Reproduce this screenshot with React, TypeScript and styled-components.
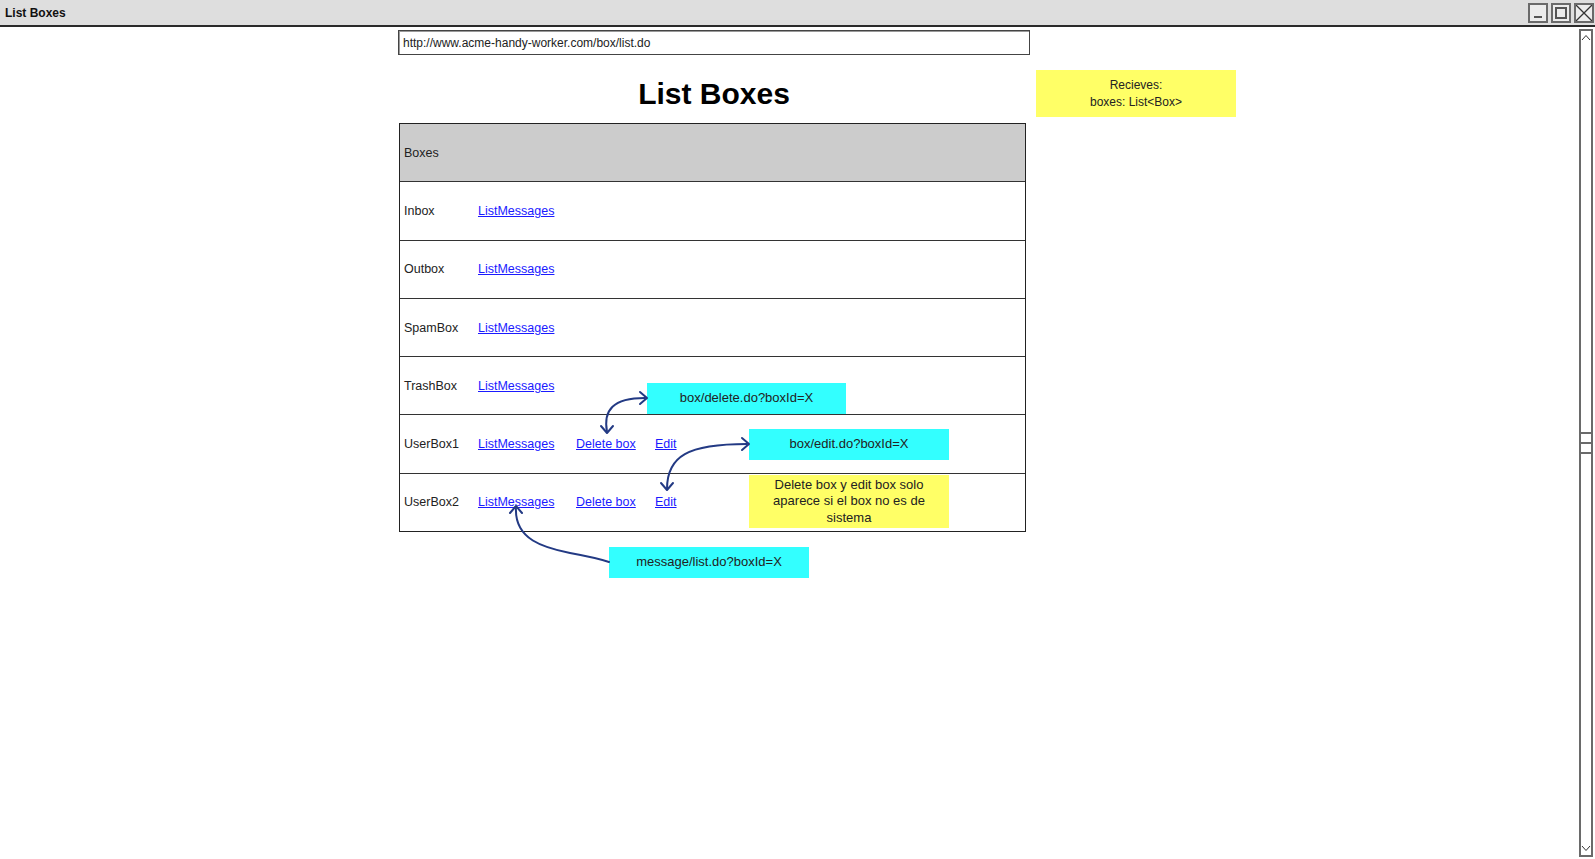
import React, { FC } from 'react';
import styled, { createGlobalStyle } from 'styled-components';

const GlobalStyle = createGlobalStyle`
  html, body {
    margin: 0;
    padding: 0;
    background: #ffffff;
  }
  body {
    font-family: 'Liberation Sans', Arial, sans-serif;
    color: #222222;
  }
`;

const INK = '#233a84';

const Window = styled.div`
  position: relative;
  width: 1595px;
  height: 859px;
  display: flex;
  flex-direction: column;
  overflow: hidden;
  background: #ffffff;
`;

const TitleBar = styled.div`
  height: 25px;
  flex: none;
  display: flex;
  align-items: center;
  justify-content: space-between;
  padding-left: 5px;
  background: #dedede;
  border-bottom: 2px solid #2a2a2a;
`;

const Title = styled.span`
  font-size: 12px;
  font-weight: bold;
  color: #111111;
`;

const WindowButtons = styled.div`
  display: flex;
  gap: 3px;
  margin-right: 1px;
  align-self: flex-start;
  margin-top: 3px;
`;

const WinButton = styled.div`
  position: relative;
  width: 20px;
  height: 20px;
  box-sizing: border-box;
  border: 2px solid #6a6a6a;
  background: #ececec;
  display: flex;
  align-items: center;
  justify-content: center;
`;

const MinGlyph = styled.div`
  width: 8px;
  height: 2px;
  background: #555555;
  margin-top: 8px;
`;

const MaxGlyph = styled.div`
  width: 8px;
  height: 8px;
  border: 2px solid #555555;
`;

const Body = styled.div`
  flex: 1;
  display: flex;
  min-height: 0;
`;

const Canvas = styled.div`
  flex: 1;
`;

const Column = styled.div`
  width: 632px;
  margin-left: 398px;
  padding-top: 3px;
  display: flex;
  flex-direction: column;
`;

const UrlBar = styled.div`
  height: 25px;
  box-sizing: border-box;
  border: 1px solid #444444;
  box-shadow: inset 1px 1px 0 #999999;
  font-size: 12px;
  color: #222222;
  padding-left: 4px;
  display: flex;
  align-items: center;
`;

const Heading = styled.h1`
  margin: 22px 0 12px;
  height: 34px;
  line-height: 34px;
  font-size: 30px;
  font-weight: bold;
  text-align: center;
  color: #000000;
`;

const Table = styled.div`
  width: 627px;
  margin-left: 1px;
  box-sizing: border-box;
  border: 1px solid #222222;
  display: flex;
  flex-direction: column;
`;

const Row = styled.div<{ $header?: boolean }>`
  height: 57.3px;
  display: flex;
  align-items: center;
  padding-left: 4px;
  font-size: 12.5px;
  color: #222222;
  background: ${p => (p.$header ? '#cccccc' : '#ffffff')};
  & + & {
    border-top: 1px solid #333333;
  }
`;

const Cell = styled.span<{ $w?: number }>`
  width: ${p => (p.$w ? `${p.$w}px` : 'auto')};
  flex: none;
`;

const Link = styled.a`
  color: #1a1aff;
  text-decoration: underline;
  font-size: 12.5px;
`;

const Scrollbar = styled.div`
  width: 14px;
  margin: 2px 2px 2px 0;
  box-sizing: border-box;
  border: 2px solid #6a6a6a;
  display: flex;
  flex-direction: column;
  justify-content: space-between;
  align-items: center;
`;

const ScrollArrow = styled.svg`
  width: 10px;
  height: 8px;
  margin: 3px 0;
`;

const Grip = styled.div`
  display: flex;
  flex-direction: column;
  gap: 8px;
  width: 100%;
`;

const GripLine = styled.div`
  height: 2px;
  background: #6a6a6a;
`;

const Note = styled.div<{ $color: string; $x: number; $y: number; $w: number; $h: number; $size?: number }>`
  position: absolute;
  left: ${p => p.$x}px;
  top: ${p => p.$y}px;
  width: ${p => p.$w}px;
  height: ${p => p.$h}px;
  background: ${p => p.$color};
  display: flex;
  align-items: center;
  justify-content: center;
  text-align: center;
  font-size: ${p => p.$size ?? 13}px;
  line-height: 16.5px;
  color: #222222;
`;

const Arrows = styled.svg`
  position: absolute;
  left: 0;
  top: 0;
  pointer-events: none;
`;

const CYAN = '#33ffff';
const YELLOW = '#ffff66';

const boxes = [
  { name: 'Inbox', own: false },
  { name: 'Outbox', own: false },
  { name: 'SpamBox', own: false },
  { name: 'TrashBox', own: false },
  { name: 'UserBox1', own: true },
  { name: 'UserBox2', own: true },
];

const App: FC = () => {
  return (
    <Window>
      <GlobalStyle />
      <TitleBar>
        <Title>List Boxes</Title>
        <WindowButtons>
          <WinButton>
            <MinGlyph />
          </WinButton>
          <WinButton>
            <MaxGlyph />
          </WinButton>
          <WinButton>
            <svg width='16' height='16' viewBox='0 0 16 16'>
              <path d='M0 0 L16 16 M16 0 L0 16' stroke='#333' strokeWidth='1.3' />
            </svg>
          </WinButton>
        </WindowButtons>
      </TitleBar>
      <Body>
        <Canvas>
          <Column>
            <UrlBar>http://www.acme-handy-worker.com/box/list.do</UrlBar>
            <Heading>List Boxes</Heading>
            <Table>
              <Row $header>Boxes</Row>
              {boxes.map(b => (
                <Row key={b.name}>
                  <Cell $w={74}>{b.name}</Cell>
                  <Cell $w={98}>
                    <Link>ListMessages</Link>
                  </Cell>
                  {b.own && (
                    <>
                      <Cell $w={79}>
                        <Link>Delete box</Link>
                      </Cell>
                      <Cell>
                        <Link>Edit</Link>
                      </Cell>
                    </>
                  )}
                </Row>
              ))}
            </Table>
          </Column>
        </Canvas>
        <Scrollbar>
          <ScrollArrow viewBox='0 0 10 8'>
            <path d='M1 6 L5 1.5 L9 6' fill='none' stroke='#333' strokeWidth='1' />
          </ScrollArrow>
          <Grip>
            <GripLine />
            <GripLine />
            <GripLine />
          </Grip>
          <ScrollArrow viewBox='0 0 10 8'>
            <path d='M1 2 L5 6.5 L9 2' fill='none' stroke='#333' strokeWidth='1' />
          </ScrollArrow>
        </Scrollbar>
      </Body>

      <Note $color={YELLOW} $x={1036} $y={70} $w={200} $h={47} $size={12}>
        Recieves:
        <br />
        boxes: List&lt;Box&gt;
      </Note>
      <Note $color={CYAN} $x={647} $y={383} $w={199} $h={31}>
        box/delete.do?boxId=X
      </Note>
      <Note $color={CYAN} $x={749} $y={429} $w={200} $h={31}>
        box/edit.do?boxId=X
      </Note>
      <Note $color={YELLOW} $x={749} $y={475} $w={200} $h={53}>
        Delete box y edit box solo
        <br />
        aparece si el box no es de
        <br />
        sistema
      </Note>
      <Note $color={CYAN} $x={609} $y={547} $w={200} $h={31}>
        message/list.do?boxId=X
      </Note>

      <Arrows width='1595' height='859' viewBox='0 0 1595 859'>
        <g fill='none' stroke={INK} strokeWidth='2' strokeLinecap='round' strokeLinejoin='round'>
          <path d='M607 432 C603 410 613 398 645 398' />
          <path d='M601 426 L607 433 L613 426' />
          <path d='M640 392 L647 398 L640 404' />

          <path d='M667 489 C667 456 688 444 747 444' />
          <path d='M661 483 L667 490 L673 483' />
          <path d='M742 438 L749 444 L742 450' />

          <path d='M516 507 C514 540 545 548 570 553 C592 557 600 559 609 562' />
          <path d='M510 513 L516 506 L522 513' />
        </g>
      </Arrows>
    </Window>
  );
};

export default App;
